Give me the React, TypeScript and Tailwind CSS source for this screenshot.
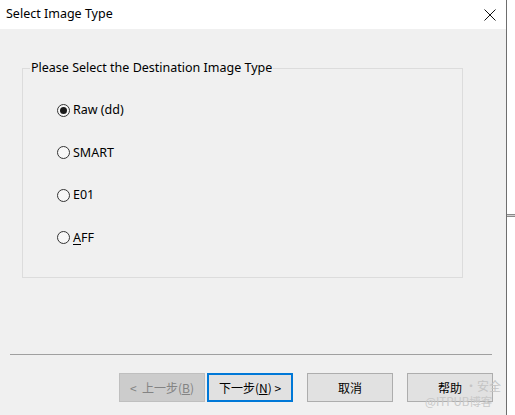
import React from "react";

const ui = { fontFamily: '"Noto Sans", "Noto Sans CJK SC", sans-serif' };

function Radio({ label, checked, accent }: { label: string; checked?: boolean; accent?: number }) {
  return (
    <label className="flex h-[16px] items-center text-[12.5px] leading-[16px] text-[#000]">
      <span className="flex h-[13px] w-[13px] items-center justify-center rounded-full border border-[#333] bg-[#f7f7f7]">
        {checked && <span className="h-[7px] w-[7px] rounded-full bg-[#1a1a1a]" />}
      </span>
      <span className="ml-[3px]">
        {accent === undefined ? (
          label
        ) : (
          <>
            <span className="underline underline-offset-2">{label[accent]}</span>
            {label.slice(accent + 1)}
          </>
        )}
      </span>
    </label>
  );
}

function DlgButton({
  children,
  variant = "normal",
}: {
  children: React.ReactNode;
  variant?: "normal" | "disabled" | "default";
}) {
  const cls =
    variant === "disabled"
      ? "border border-[#bfbfbf] bg-[#cccccc] text-[#838383]"
      : variant === "default"
        ? "border-2 border-[#0078d7] bg-[#e1e1e1] text-[#000]"
        : "border border-[#adadad] bg-[#e1e1e1] text-[#000]";
  return (
    <button
      type="button"
      className={`flex h-[29px] w-[86px] items-center justify-center text-[12px] ${cls}`}
      style={{ fontFamily: '"Noto Sans CJK SC", sans-serif' }}
    >
      {children}
    </button>
  );
}

export default function App() {
  return (
    <div className="flex h-[415px] w-[515px] overflow-hidden bg-white" style={ui}>
      <div className="flex w-[506px] flex-col">
        {/* title bar */}
        <div className="flex h-[29px] shrink-0 items-center justify-between bg-white pl-[6px] pr-[10px]">
          <span className="text-[12.5px] text-[#000]">Select Image Type</span>
          <svg width="12" height="12" viewBox="0 0 12 12">
            <path d="M0.5 0.5 L11.5 11.5 M11.5 0.5 L0.5 11.5" stroke="#111" strokeWidth="1" fill="none" />
          </svg>
        </div>

        {/* body */}
        <div className="flex flex-1 flex-col bg-[#f0f0f0]">
          <fieldset className="ml-[22px] mt-[31px] h-[218px] w-[441px] border border-[#dcdcdc]">
            <legend className="ml-[7px] px-[1px] text-[12.5px] leading-[16px] text-[#000]">
              Please Select the Destination Image Type
            </legend>
            <div className="flex flex-col gap-[26.5px] pl-[34px] pt-[26px]">
              <Radio label="Raw (dd)" checked />
              <Radio label="SMART" />
              <Radio label="E01" />
              <Radio label="AFF" accent={0} />
            </div>
          </fieldset>

          <div className="ml-[10px] mt-[76px] h-px w-[482px] bg-[#a0a0a0]" />

          <div className="ml-[119px] mt-[18px] flex">
            <DlgButton variant="disabled">
              &lt;&nbsp; 上一步(<span className="underline">B</span>)
            </DlgButton>
            <div className="ml-[2px]">
              <DlgButton variant="default">
                下一步(<span className="underline">N</span>) &gt;
              </DlgButton>
            </div>
            <div className="ml-[14px]">
              <DlgButton>取消</DlgButton>
            </div>
            <div className="relative ml-[14px]">
              <DlgButton>帮助</DlgButton>
              {/* faint watermark lying over the button */}
              <div
                className="pointer-events-none absolute left-[58px] top-[6px] whitespace-nowrap text-[12px] leading-[13px] text-[#c4c4c4]"
                style={{ fontFamily: '"Noto Sans CJK SC", sans-serif' }}
              >
                ·安全
              </div>
              <div
                className="pointer-events-none absolute left-[18px] top-[22px] whitespace-nowrap text-[11.5px] leading-[12px] text-[#c8c8c8]"
                style={{ fontFamily: '"Noto Sans CJK SC", sans-serif' }}
              >
                @ITPUB博客
              </div>
            </div>
          </div>
        </div>
      </div>

      {/* window edge */}
      <div className="w-px bg-[#6e6e6e]" />
      <div className="flex flex-1 flex-col bg-white">
        <div className="mt-[214px] h-[3px] border-y border-[#8a8a8a] bg-[#d0d0d0]" />
      </div>
    </div>
  );
}
